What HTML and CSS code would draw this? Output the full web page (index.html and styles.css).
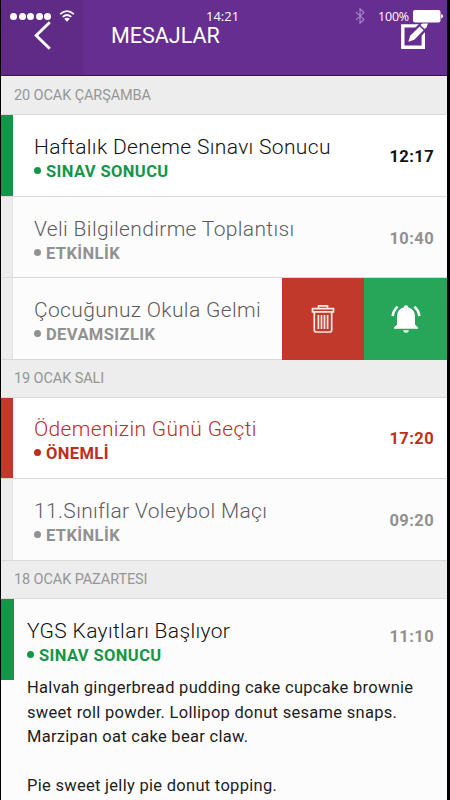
FILE: index.html
```
<!DOCTYPE html>
<html lang="tr">
<head>
  <meta charset="UTF-8">
  <meta name="viewport" content="width=device-width, initial-scale=1.0">
  <title>Mesajlar</title>
  <link rel="stylesheet" href="styles.css">
</head>
<body>
  <div class="screen">
    <header>
      <button class="back">
        <svg width="20" height="32" viewBox="0 0 20 32" fill="none" stroke="#fff" stroke-width="2.9"><path d="M17.8 3.3 4.200 16.500 17.800 29.700"/></svg>
      </button>
      <h1>MESAJLAR</h1>
      <div class="status">
        <span class="signal"><i></i><i></i><i></i><i></i><i></i></span>
        <svg class="wifi" width="16" height="12" viewBox="0 0 16 12" fill="none" stroke="#fff" stroke-width="1.7">
          <path d="M1.2 4.1Q8-1.9 14.8 4.1M3.7 6.9Q8 3.1 12.3 6.9"/>
          <path d="M5.2 8.8Q8 6.6 10.8 8.8L8 11.7Z" fill="#fff" stroke="none"/>
        </svg>
        <span class="clock">14:21</span>
        <svg class="bluetooth" width="10" height="16" viewBox="0 0 10 16" fill="none" stroke="#a98bc8" stroke-width="1.1"><path d="M1 4.2 9 11.4 5 15.2V.8L9 4.6 1 11.8"/></svg>
        <span class="percent">100%</span>
        <svg class="battery" width="30" height="13" viewBox="0 0 30 13" fill="#fff"><rect width="27.5" height="12.4" rx="2"/><path d="M28.2 4Q30 4.6 30 6.2T28.2 8.4Z"/></svg>
      </div>
      <button class="compose">
        <svg width="32" height="28" viewBox="0 0 32 28">
          <path d="M2.800 3.900H23.300V25.300H2.800Z" fill="none" stroke="#fff" stroke-width="3.400"/>
          <path d="M7 21.500 9.500 11.500 19.500 1.500 28 7 17 18.500Z" fill="#672e91"/>
          <path d="M8.300 19.700 10.200 13.800 19.600 4.500 23.600 8.200 14.300 17.700Z" fill="#fff"/>
          <path d="M20.600 3.400 22.500 1.500H28L26.500 5.200 24.700 7.100Z" fill="#fff"/>
        </svg>
      </button>
    </header>

    <h2>20 OCAK ÇARŞAMBA</h2>
    <div class="message unread">
      <div class="info">
        <h3>Haftalık Deneme Sınavı Sonucu</h3>
        <p class="tag">SINAV SONUCU</p>
      </div>
      <time>12:17</time>
    </div>
    <div class="message short">
      <div class="info">
        <h3>Veli Bilgilendirme Toplantısı</h3>
        <p class="tag">ETKİNLİK</p>
      </div>
      <time>10:40</time>
    </div>
    <div class="message swiped">
      <div class="info">
        <h3>Çocuğunuz Okula Gelmi</h3>
        <p class="tag">DEVAMSIZLIK</p>
      </div>
      <div class="actions">
        <button class="delete">
          <svg width="24" height="30" viewBox="0 0 24 30" fill="none" stroke="#fbe9e7" stroke-width="1.7">
            <path d="M7.5 4.2V1.8H16.5V4.2M1.5 4.6H22.5V7.8H1.5ZM3.3 8V26Q3.3 28 5.3 28H18.7Q20.7 28 20.7 26V8"/>
            <path d="M7.4 11V25M10.5 11V25M13.5 11V25M16.6 11V25"/>
          </svg>
        </button>
        <button class="remind">
          <svg width="30" height="30" viewBox="0 0 30 30" fill="#fff">
            <path d="M15 1.3a2.2 2.2 0 0 1 2.3 2.1C21.8 4.5 24 8 24 12.5V20.5L27 23.4V24.8H3V23.4L6 20.5V12.5C6 8 8.200 4.500 12.700 3.400A2.200 2.200 0 0 1 15 1.300Z"/>
            <path d="M12 26.200H18Q17.500 28.800 15 28.800T12 26.200Z"/>
            <path d="M6.600 2.600Q2.200 6.600 1.700 12.200M23.400 2.600Q27.800 6.600 28.300 12.200" fill="none" stroke="#fff" stroke-width="2.600"/>
          </svg>
        </button>
      </div>
    </div>

    <h2>19 OCAK SALI</h2>
    <div class="message unread important short">
      <div class="info">
        <h3>Ödemenizin Günü Geçti</h3>
        <p class="tag">ÖNEMLİ</p>
      </div>
      <time>17:20</time>
    </div>
    <div class="message">
      <div class="info">
        <h3>11.Sınıflar Voleybol Maçı</h3>
        <p class="tag">ETKİNLİK</p>
      </div>
      <time>09:20</time>
    </div>

    <h2>18 OCAK PAZARTESI</h2>
    <div class="message open">
      <div class="info">
        <h3>YGS Kayıtları Başlıyor</h3>
        <p class="tag">SINAV SONUCU</p>
      </div>
      <time>11:10</time>
    </div>
    <div class="content">
      <p>Halvah gingerbread pudding cake cupcake brownie<br>sweet roll powder. Lollipop donut sesame snaps.<br>Marzipan oat cake bear claw.</p>
      <p>Pie sweet jelly pie donut topping.</p>
    </div>
  </div>
</body>
</html>
```
FILE: styles.css
```
* {
  box-sizing: border-box;
}
body {
  font-family: Roboto, sans-serif;
  background-color: #000;
  margin: 0;
  height: 800px;
  overflow: hidden;
}
h1, h2, h3, p {
  margin: 0;
  white-space: nowrap;
}
button {
  border: none;
  padding: 0;
  background: none;
  display: flex;
  align-items: center;
  justify-content: center;
}
svg {
  display: block;
}
.screen {
  width: 446px;
  height: 800px;
  margin-left: 1px;
  overflow: hidden;
  background-color: #fcfcfc;
}

/* header */
header {
  position: relative;
  display: flex;
  height: 76px;
  background-color: #672e91;
  border-bottom: 1px solid #430b6b;
  color: white;
}
.back {
  width: 82px;
  height: 75px;
  background-color: #602a87;
  padding-bottom: 5px;
}
h1 {
  flex: 1;
  padding-left: 28px;
  font-size: 21.5px;
  font-weight: 400;
  line-height: 72px;
}
.compose {
  position: relative;
  width: 62px;
  height: 70px;
  padding-top: 2px;
}
.status {
  position: absolute;
  left: 9px;
  right: 4px;
  top: 8px;
  height: 16px;
  display: flex;
  align-items: center;
  font-family: "Open Sans", sans-serif;
  font-size: 12.5px;
}
.signal {
  display: flex;
  gap: 1.5px;
}
.signal i {
  width: 7px;
  height: 7px;
  border-radius: 50%;
  background: white;
}
.wifi {
  margin-left: 8px;
}
.clock {
  margin-left: 131px;
  font-size: 13px;
}
.bluetooth {
  margin-left: auto;
}
.percent {
  margin-left: 13px;
  width: 33px;
  font-size: 12.5px;
  letter-spacing: -0.2px;
}
.battery {
  margin-left: 2px;
}

/* date headings */
h2 {
  height: 38px;
  padding-left: 13px;
  background-color: #ededed;
  border-bottom: 1px solid #d9d9d9;
  color: #969696;
  font-size: 14.5px;
  font-weight: 400;
  line-height: 38px;
  letter-spacing: -0.1px;
}
header + h2 {
  height: 39px;
  line-height: 40px;
}

/* message rows */
.message {
  display: flex;
  height: 82px;
  border-bottom: 1px solid #d9d9d9;
  background: linear-gradient(to right, #ededed 11px, #e0e0e0 11px, #e0e0e0 12px, #fcfcfc 12px);
  color: #919191;
}
.message.short {
  height: 81px;
}
.info {
  flex: 1;
  padding: 19px 0 0 33px;
}
h3 {
  color: #5c5c5c;
  font-size: 21px;
  font-weight: 300;
  line-height: 26px;
  letter-spacing: 0.34px;
}
.tag {
  display: flex;
  align-items: center;
  gap: 5px;
  font-size: 16.5px;
  font-weight: 700;
  line-height: 24px;
  letter-spacing: 0.4px;
}
.tag::before {
  content: "";
  width: 7px;
  height: 7px;
  margin-bottom: 3px;
  border-radius: 50%;
  background: currentColor;
}
time {
  padding: 32px 13px 0 0;
  font-size: 16.5px;
  font-weight: 700;
  line-height: 20px;
  letter-spacing: 0.4px;
}
.unread {
  background: linear-gradient(to right, #139647 12px, #fff 12px);
}
.unread h3, .unread time {
  color: #111;
}
.unread .tag, .open .tag {
  color: #139647;
}
.important {
  background: linear-gradient(to right, #c0392b 12px, #fff 12px);
}
.important .info {
  padding-top: 18px;
}
.important time {
  padding-top: 31px;
}
.important h3, .important .tag, .important time {
  color: #bd2d20;
}

/* swipe actions */
.actions {
  display: flex;
  height: 82px;
}
.actions button {
  width: 82px;
}
.actions .delete {
  background-color: #c0392b;
}
.actions .remind {
  width: 83px;
  background-color: #27a65a;
}

/* expanded message */
.open {
  height: 81px;
  border: none;
  background: linear-gradient(to right, #139647 13px, #fcfcfc 13px);
}
.open .info {
  padding-left: 26px;
}
.open h3 {
  color: #111;
}
.open time {
  padding-top: 28px;
}
.content {
  padding-left: 26px;
  margin-top: -4px;
  color: #1c1c1c;
  font-size: 16.5px;
  line-height: 24.6px;
  letter-spacing: 0.29px;
}
.content p + p {
  margin-top: 24.6px;
}
```
